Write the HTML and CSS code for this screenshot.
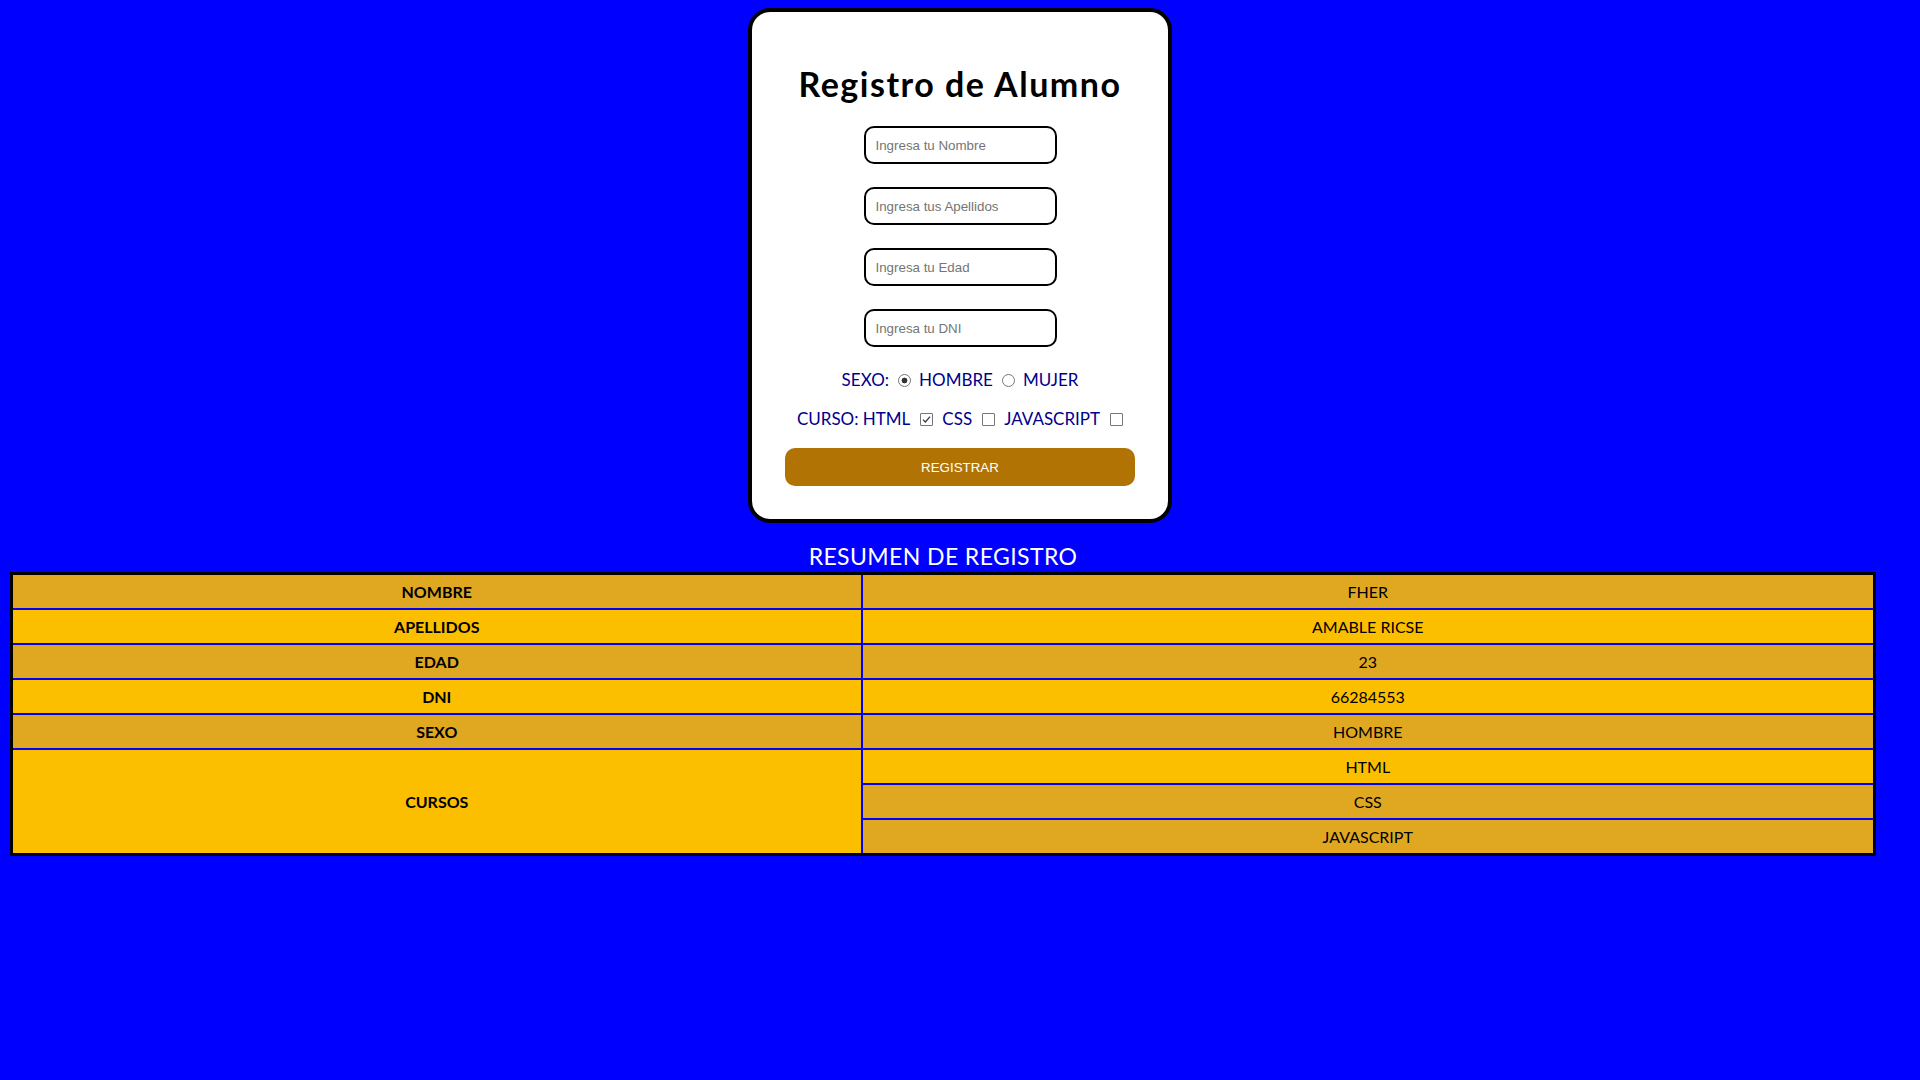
FILE: index.html
```html
<!DOCTYPE html>
<html lang="es">
<head>
<meta charset="utf-8">
<title>Registro de Alumno</title>
<link rel="stylesheet" href="styles.css">
</head>
<body>
<form class="card">
  <h1 class="title">Registro de Alumno</h1>
  <input class="field" type="text" placeholder="Ingresa tu Nombre">
  <input class="field" type="text" placeholder="Ingresa tus Apellidos">
  <input class="field" type="text" placeholder="Ingresa tu Edad">
  <input class="field field-last" type="text" placeholder="Ingresa tu DNI">
  <div class="opts opts-sexo">
    <span class="lbl">SEXO:</span>
    <input class="radio" type="radio" name="sexo" checked>
    <span class="lbl">HOMBRE</span>
    <input class="radio" type="radio" name="sexo">
    <span class="lbl">MUJER</span>
  </div>
  <div class="opts opts-curso">
    <span class="lbl">CURSO:&nbsp;HTML</span>
    <input class="check" type="checkbox" checked>
    <span class="lbl">CSS</span>
    <input class="check" type="checkbox">
    <span class="lbl">JAVASCRIPT</span>
    <input class="check check-last" type="checkbox">
  </div>
  <button class="btn" type="button">REGISTRAR</button>
</form>

<section class="resumen">
  <h2 class="resumen-title">RESUMEN DE REGISTRO</h2>
  <table class="tabla">
    <colgroup><col class="col-a"><col class="col-b"></colgroup>
    <tr class="dark"><th>NOMBRE</th><td>FHER</td></tr>
    <tr class="light"><th>APELLIDOS</th><td>AMABLE RICSE</td></tr>
    <tr class="dark"><th>EDAD</th><td>23</td></tr>
    <tr class="light"><th>DNI</th><td>66284553</td></tr>
    <tr class="dark"><th>SEXO</th><td>HOMBRE</td></tr>
    <tr class="light"><th rowspan="3">CURSOS</th><td>HTML</td></tr>
    <tr class="dark"><td>CSS</td></tr>
    <tr class="dark"><td>JAVASCRIPT</td></tr>
  </table>
</section>
</body>
</html>
```
FILE: styles.css
```css
body {
  margin: 8px;
  background: #0000ff;
  font-family: Lato, "Open Sans", sans-serif;
}

.card {
  width: 416px;
  margin: 0 auto;
  background: #ffffff;
  border: 4px solid #000000;
  border-radius: 22px;
  padding: 52px 0 33px;
  display: flex;
  flex-direction: column;
  align-items: center;
}

.title {
  margin: 0 0 22px;
  font-size: 34px;
  line-height: 40px;
  font-weight: 700;
  letter-spacing: 1.5px;
  color: #000000;
}

.field {
  box-sizing: border-box;
  width: 193px;
  height: 38px;
  margin: 0 0 23px;
  padding: 0 10px;
  border: 2px solid #000000;
  border-radius: 10px;
  font: 13.33px "Liberation Sans", Arial, sans-serif;
  background: #ffffff;
  outline: none;
}

.field-last {
  margin-bottom: 0;
}

.field::placeholder {
  color: #757575;
}

.opts {
  display: flex;
  align-items: center;
  justify-content: center;
  height: 22px;
  color: #00008b;
  font-size: 17px;
  line-height: 22px;
}

.opts-sexo {
  margin-top: 22px;
}

.opts-curso {
  margin-top: 17px;
}

.radio,
.check {
  appearance: none;
  -webkit-appearance: none;
  box-sizing: border-box;
  width: 13px;
  height: 13px;
  border: 1px solid #767676;
  background: #ffffff;
}

.radio {
  border-radius: 50%;
  margin: 0 8px 0 9px;
}

.radio:checked {
  background: radial-gradient(circle, #333333 0 2.6px, #ffffff 3.2px);
}

.check {
  border-radius: 1px;
  margin: 0 9px 0 10px;
}

.check:checked {
  background: #ffffff url("data:image/svg+xml,%3Csvg xmlns='http://www.w3.org/2000/svg' viewBox='0 0 11 11'%3E%3Cpath d='M2 5.6 L4.4 8 L9 2.6' fill='none' stroke='%23333' stroke-width='1.2'/%3E%3C/svg%3E") center / 11px 11px no-repeat;
}

.check-last {
  margin-right: 0;
}

.btn {
  margin-top: 18px;
  width: 350px;
  height: 38px;
  border: none;
  border-radius: 10px;
  background: #b17404;
  color: #ffffff;
  font: 13.33px "Liberation Sans", Arial, sans-serif;
}

.resumen {
  width: 1866px;
  margin: 19px 0 0 2px;
}

.resumen-title {
  margin: 0 0 2px;
  text-align: center;
  color: #ffffff;
  font-size: 23px;
  line-height: 28px;
  font-weight: 400;
  letter-spacing: 0.4px;
}

.tabla {
  width: 100%;
  border-collapse: collapse;
  border: 3px solid #000000;
  font-size: 16px;
  color: #000000;
}

.col-a {
  width: 850px;
}

.tabla th,
.tabla td {
  border: 2px solid #0000ff;
  padding: 0;
  height: 33px;
  line-height: 20px;
  text-align: center;
}

.tabla th {
  font-weight: 700;
}

.tabla td {
  font-weight: 400;
}

.dark th,
.dark td {
  background: #e0a820;
}

.light th,
.light td {
  background: #fbbf00;
}
```
